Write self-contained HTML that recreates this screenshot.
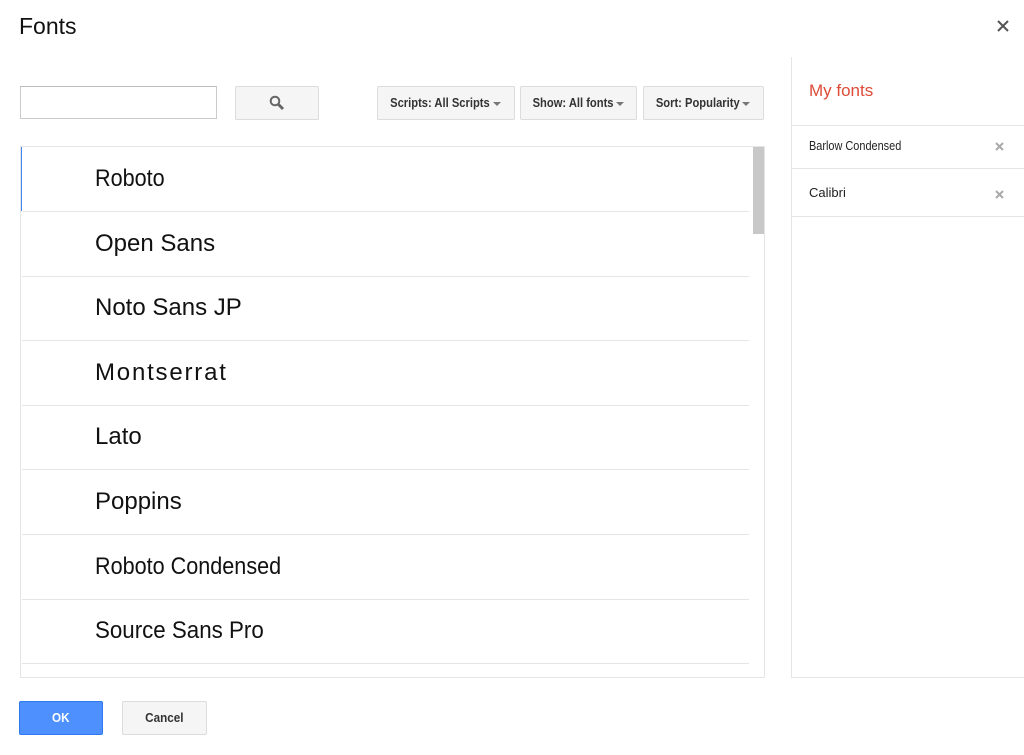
<!DOCTYPE html>
<html><head><style>
*{box-sizing:border-box;margin:0;padding:0}
body{width:1024px;height:755px;background:#fff;font-family:"Liberation Sans",sans-serif;position:relative;overflow:hidden;color:#222}
.a{position:absolute}
.btn{position:absolute;background:#f5f5f5;border:1px solid #dcdcdc;border-radius:2px;font-size:13px;font-weight:bold;color:#333;height:34px;line-height:32px;text-align:center;white-space:nowrap}
.cond{display:inline-block;transform:scaleX(.82);transform-origin:left center;white-space:nowrap}
.btn .cond{transform-origin:center center}
.row{position:absolute;left:1px;width:727px;height:65px;border-bottom:1px solid #e5e5e5}
.row span{position:absolute;left:73px;top:18px;font-size:24px;color:#111;white-space:nowrap;transform-origin:left center}
.arr{display:inline-block;width:0;height:0;border-left:4px solid transparent;border-right:4px solid transparent;border-top:4px solid #777;vertical-align:middle}
</style></head><body>
<div class="a" style="left:19px;top:13px;font-size:23px;color:#111">Fonts</div>
<svg class="a" style="left:997px;top:20px" width="12" height="12"><path d="M1 1L11 11M11 1L1 11" stroke="#555" stroke-width="2"/></svg>

<div class="a" style="left:20px;top:86px;width:197px;height:33px;border:1px solid #ccc;border-top-color:#bbb"></div>
<div class="btn" style="left:235px;top:86px;width:84px"><svg style="margin-top:8px" width="16" height="16"><circle cx="6" cy="6" r="4.3" fill="none" stroke="#666" stroke-width="2"/><path d="M9 9L14 14" stroke="#666" stroke-width="3"/></svg></div>
<div class="btn" style="left:377px;top:86px;width:138px"><span class="cond" style="transform:scaleX(.86);margin:0 -9px">Scripts: All Scripts</span> <span class="arr"></span></div>
<div class="btn" style="left:520px;top:86px;width:117px"><span class="cond" style="transform:scaleX(.86);margin:0 -7px">Show: All fonts</span> <span class="arr"></span></div>
<div class="btn" style="left:643px;top:86px;width:121px"><span class="cond" style="transform:scaleX(.86);margin:0 -8px">Sort: Popularity</span> <span class="arr"></span></div>

<div class="a" style="left:20px;top:146px;width:745px;height:532px;border:1px solid #e5e5e5;overflow:hidden">
 <div class="a" style="left:0;top:0;width:1px;height:64px;background:#4285f4"></div>
 <div class="row" style="top:0"><span class="cond" style="transform:scaleX(.9)">Roboto</span></div>
 <div class="row" style="top:65px"><span>Open Sans</span></div>
 <div class="row" style="top:129px"><span>Noto Sans JP</span></div>
 <div class="row" style="top:194px"><span style="letter-spacing:1.8px">Montserrat</span></div>
 <div class="row" style="top:258px"><span>Lato</span></div>
 <div class="row" style="top:323px"><span>Poppins</span></div>
 <div class="row" style="top:388px"><span class="cond" style="transform:scaleX(.9)">Roboto Condensed</span></div>
 <div class="row" style="top:452px"><span class="cond" style="transform:scaleX(.93)">Source Sans Pro</span></div>
 <div class="row" style="top:517px"></div>
 <div class="a" style="left:732px;top:0;width:12px;height:87px;background:#c8c8c8"></div>
</div>

<div class="a" style="left:791px;top:57px;width:1px;height:621px;background:#e5e5e5"></div>
<div class="a" style="left:792px;top:677px;width:232px;height:1px;background:#e5e5e5"></div>
<div class="a" style="left:809px;top:81px;font-size:17px;color:#dd4b39">My fonts</div>
<div class="a" style="left:792px;top:125px;width:232px;height:1px;background:#e5e5e5"></div>
<div class="a" style="left:809px;top:138px;font-size:13px;color:#222"><span class="cond" style="transform:scaleX(.84)">Barlow Condensed</span></div>
<div class="a" style="left:792px;top:168px;width:232px;height:1px;background:#e5e5e5"></div>
<div class="a" style="left:809px;top:185px;font-size:13px;color:#222">Calibri</div>
<div class="a" style="left:792px;top:216px;width:232px;height:1px;background:#e5e5e5"></div>
<svg class="a" style="left:995px;top:142px" width="9" height="9"><path d="M1 1L8 8M8 1L1 8" stroke="#aaa" stroke-width="2"/></svg>
<svg class="a" style="left:995px;top:190px" width="9" height="9"><path d="M1 1L8 8M8 1L1 8" stroke="#aaa" stroke-width="2"/></svg>

<div class="btn" style="left:19px;top:701px;width:84px;background:#4d90fe;border-color:#3079ed;color:#fff"><span class="cond" style="transform:scaleX(.9)">OK</span></div>
<div class="btn" style="left:122px;top:701px;width:85px"><span class="cond" style="transform:scaleX(.9)">Cancel</span></div>
</body></html>
